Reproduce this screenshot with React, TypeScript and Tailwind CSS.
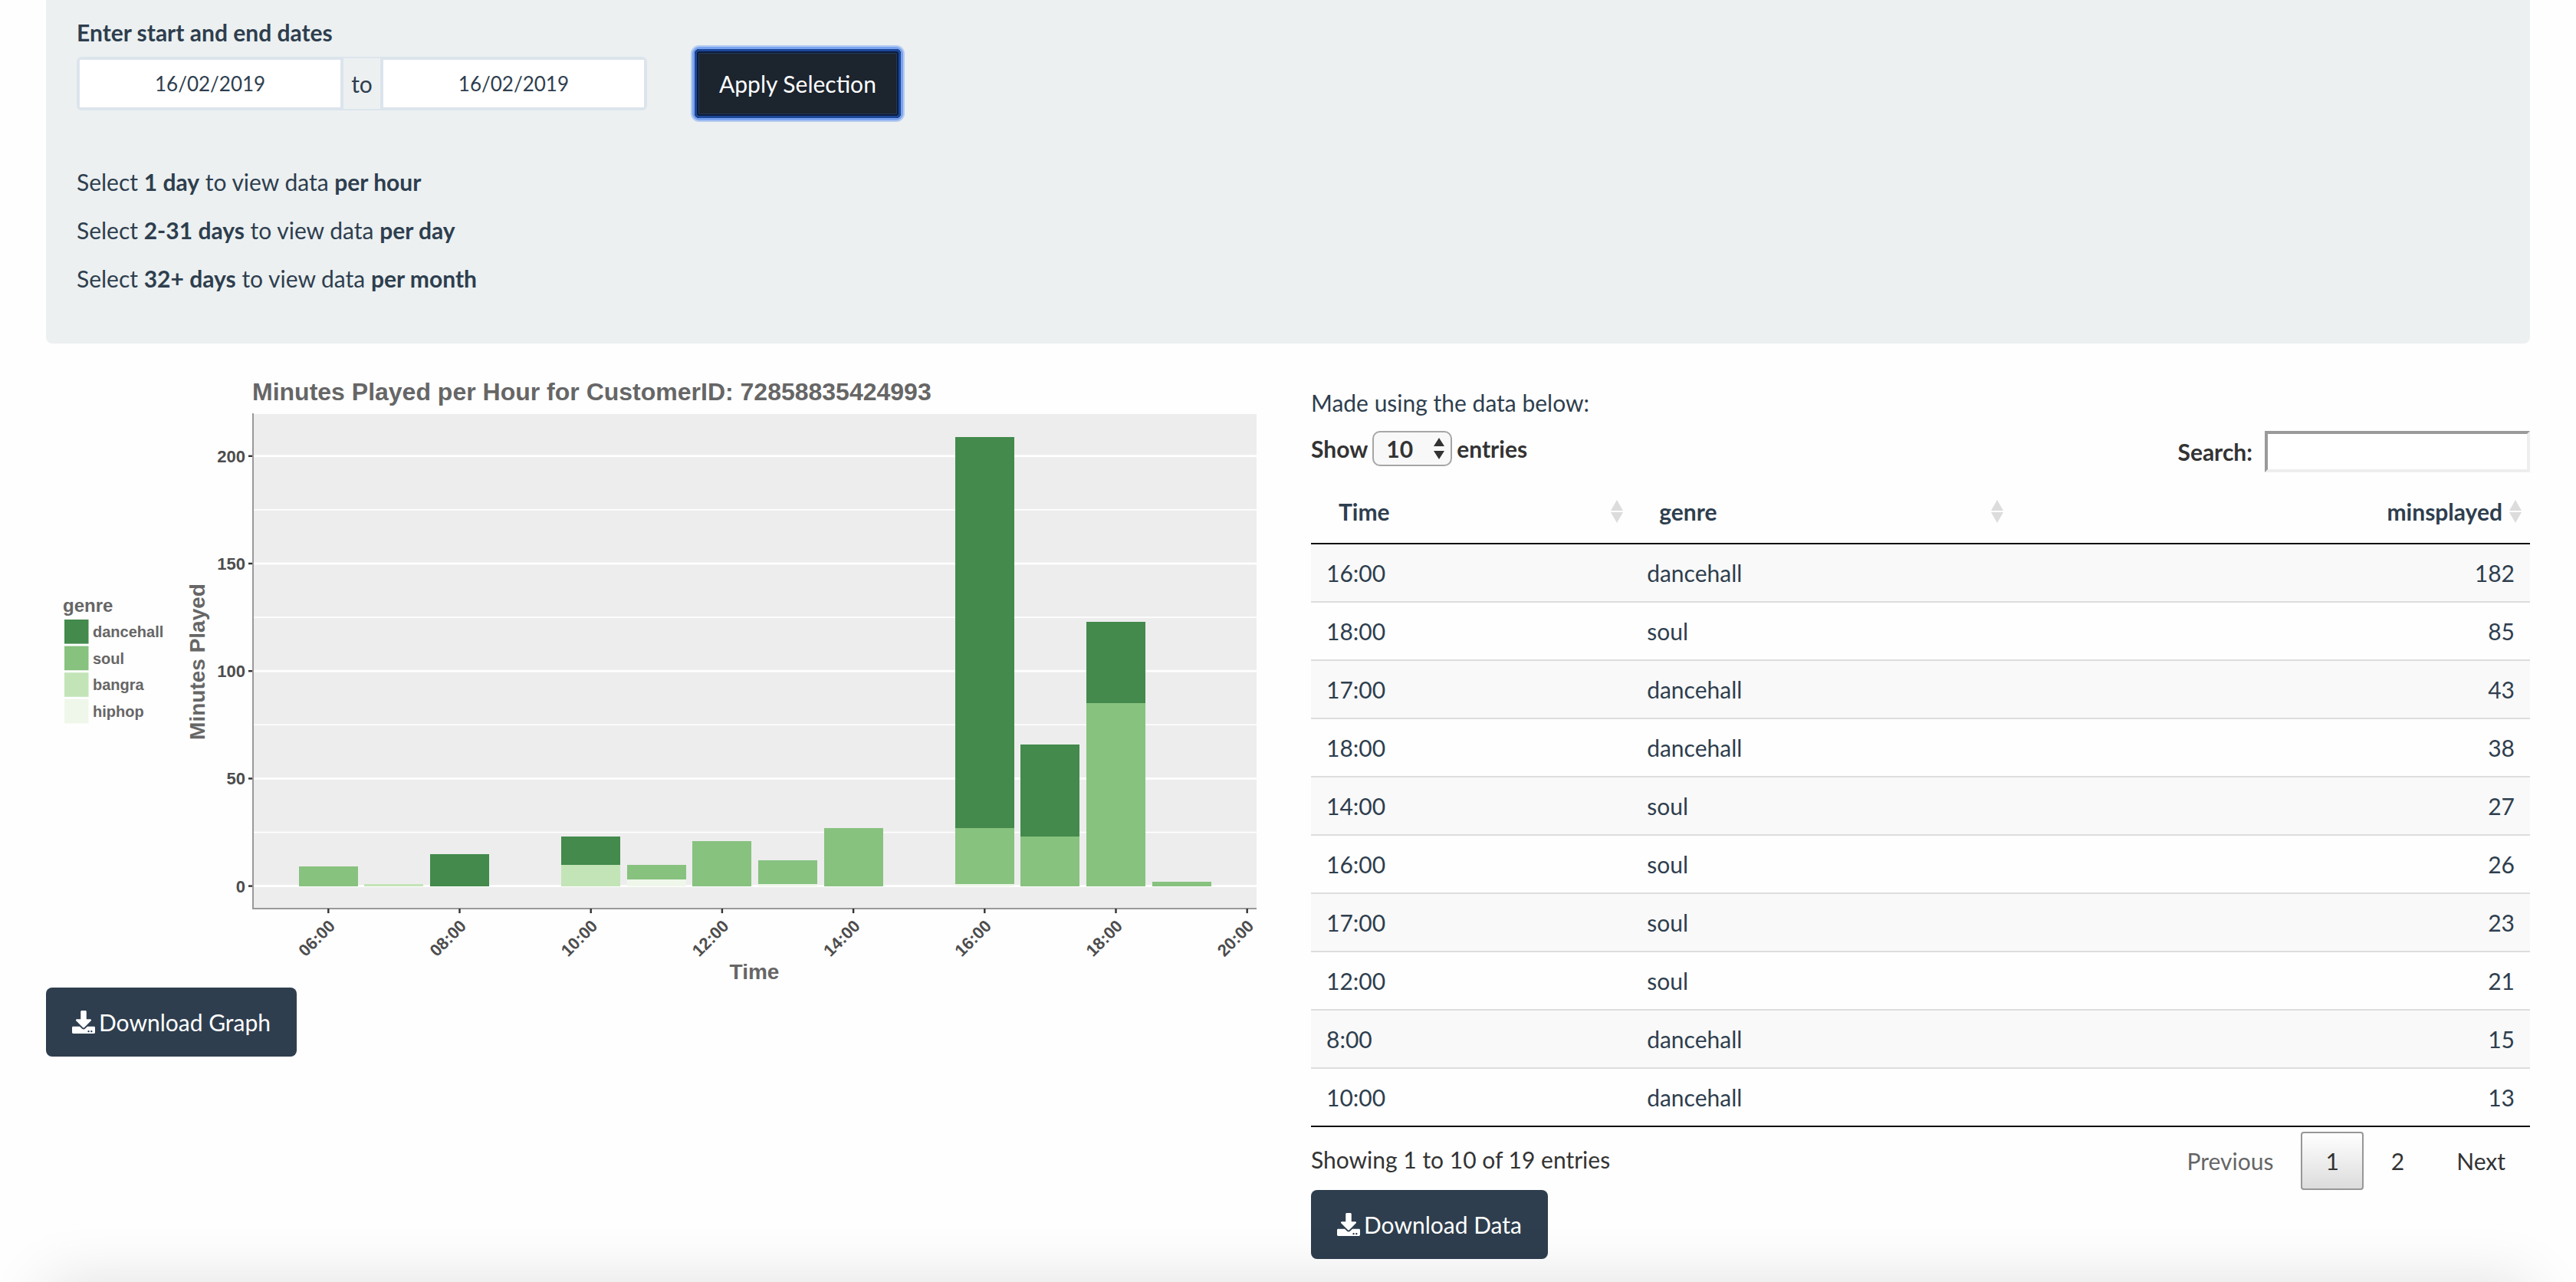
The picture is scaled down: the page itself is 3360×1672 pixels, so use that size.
import React from "react";
import { FaDownload } from "react-icons/fa";

type Genre = "dancehall" | "soul" | "bangra" | "hiphop";

const fills: Record<Genre, string> = {
  dancehall: "#438a4c",
  soul: "#87c27f",
  bangra: "#c3e4b7",
  hiphop: "#eff7eb",
};

const genres: Genre[] = ["dancehall", "soul", "bangra", "hiphop"];

// Segments are stacked upwards from the zero line.
const stacks: { hour: number; parts: [Genre, number][] }[] = [
  { hour: 6, parts: [["soul", 9]] },
  { hour: 7, parts: [["bangra", 1]] },
  { hour: 8, parts: [["dancehall", 15]] },
  { hour: 10, parts: [["bangra", 10], ["dancehall", 13]] },
  { hour: 11, parts: [["hiphop", 3], ["soul", 7]] },
  { hour: 12, parts: [["soul", 21]] },
  { hour: 13, parts: [["hiphop", 1], ["soul", 11]] },
  { hour: 14, parts: [["soul", 27]] },
  { hour: 16, parts: [["hiphop", 1], ["soul", 26], ["dancehall", 182]] },
  { hour: 17, parts: [["soul", 23], ["dancehall", 43]] },
  { hour: 18, parts: [["soul", 85], ["dancehall", 38]] },
  { hour: 19, parts: [["soul", 2]] },
];

const rows: [string, string, number][] = [
  ["16:00", "dancehall", 182],
  ["18:00", "soul", 85],
  ["17:00", "dancehall", 43],
  ["18:00", "dancehall", 38],
  ["14:00", "soul", 27],
  ["16:00", "soul", 26],
  ["17:00", "soul", 23],
  ["12:00", "soul", 21],
  ["8:00", "dancehall", 15],
  ["10:00", "dancehall", 13],
];

const xAt = (hour: number) => 368.3 + 85.6 * (hour - 6);
const yAt = (mins: number) => 667.6 - 2.804 * mins;

function Chart() {
  return (
    <svg
      viewBox="0 0 1590 800"
      className="block w-full"
      role="img"
      aria-label="Minutes played per hour, stacked by genre"
      fontFamily='"Liberation Sans", Arial, sans-serif'
      fontWeight="bold"
      fill="#666666"
    >
      <text x="269" y="34" fontSize="32">
        Minutes Played per Hour for CustomerID: 72858835424993
      </text>
      <rect x="270" y="52" width="1309" height="645" fill="#ededed" />
      {[25, 75, 125, 175].map((v) => (
        <rect key={v} x="270" y={yAt(v) - 0.8} width="1309" height="1.6" fill="#ffffff" />
      ))}
      {[0, 50, 100, 150, 200].map((v) => (
        <g key={v}>
          <rect x="270" y={yAt(v) - 1.4} width="1309" height="2.8" fill="#ffffff" />
          <rect x="264" y={yAt(v) - 1.2} width="6" height="2.4" fill="#333333" />
          <text x="260" y={yAt(v) + 8} fontSize="22" textAnchor="end" fill="#4d4d4d">
            {v}
          </text>
        </g>
      ))}
      {stacks.map(({ hour, parts }) => {
        let base = 0;
        return (
          <g key={hour} shapeRendering="crispEdges">
            {parts.map(([genre, mins]) => {
              const from = base;
              base += mins;
              return (
                <rect
                  key={genre}
                  x={xAt(hour) - 38.5}
                  y={yAt(base)}
                  width="77"
                  height={yAt(from) - yAt(base)}
                  fill={fills[genre]}
                />
              );
            })}
          </g>
        );
      })}
      <rect x="269" y="51" width="2" height="647" fill="#999999" />
      <rect x="269" y="696" width="1310" height="2" fill="#999999" />
      {[6, 8, 10, 12, 14, 16, 18, 20].map((h) => (
        <g key={h}>
          <rect x={xAt(h) - 1.2} y="697" width="2.4" height="6" fill="#333333" />
          <text
            transform={`translate(${xAt(h) + 10} 721) rotate(-45)`}
            fontSize="22"
            textAnchor="end"
            fill="#4d4d4d"
          >
            {String(h).padStart(2, "0")}:00
          </text>
        </g>
      ))}
      <text x="924" y="789" fontSize="28" textAnchor="middle">
        Time
      </text>
      <text transform="translate(207 375) rotate(-90)" fontSize="28" textAnchor="middle">
        Minutes Played
      </text>
      <text x="22" y="310" fontSize="24">
        genre
      </text>
      {genres.map((g, i) => (
        <g key={g}>
          <rect x="24" y={320 + i * 34.6} width="31.5" height="31.6" fill={fills[g]} />
          <text x="61" y={343 + i * 34.6} fontSize="20">
            {g}
          </text>
        </g>
      ))}
    </svg>
  );
}

function SortIcon() {
  return (
    <svg viewBox="0 0 16 30" className="h-[30px] w-4 shrink-0" fill="#dcdcdc" aria-hidden="true">
      <path d="M8 0L16 14H0zM8 30L0 16H16z" />
    </svg>
  );
}

function DownloadButton({ label }: { label: string }) {
  return (
    <button
      type="button"
      className="flex h-[90px] items-center gap-[5px] rounded-lg bg-[#2e3e4e] px-[34px] text-white"
    >
      <FaDownload aria-hidden="true" />
      {label}
    </button>
  );
}

function Hint({ range, unit }: { range: string; unit: string }) {
  return (
    <p>
      Select <strong>{range}</strong> to view data <strong>{unit}</strong>
    </p>
  );
}

export default function App() {
  return (
    <div className="relative min-h-screen overflow-hidden bg-[#fefefe] px-[60px] pb-[30px] font-['Lato',sans-serif] text-[30px] leading-[42px] text-[#2e3e4e]">
      <section className="rounded-b-lg bg-[#ecf0f1] px-10 pt-[21px] pb-16">
        <div className="flex items-start gap-[62px]">
          <div>
            <label htmlFor="start-date" className="block font-bold">
              Enter start and end dates
            </label>
            <div className="mt-[11px] flex h-[70px] w-[744px] items-stretch overflow-hidden rounded-md">
              <input
                id="start-date"
                defaultValue="16/02/2019"
                className="min-w-0 flex-1 border-4 border-[#dce4ec] bg-white text-center text-[26px] outline-none"
              />
              <span className="flex items-center border-y-2 border-[#dce4ec] px-[10px]">to</span>
              <input
                aria-label="End date"
                defaultValue="16/02/2019"
                className="min-w-0 flex-1 border-4 border-[#dce4ec] bg-white text-center text-[26px] outline-none"
              />
            </div>
          </div>
          <button
            type="button"
            className="mt-[43px] h-[90px] rounded-md bg-[#1c242e] px-8 text-white shadow-[inset_0_0_0_3px_#1c4899,inset_0_0_0_5px_#0b1b3c,inset_0_0_0_6px_#24395c,0_0_0_3px_#7aa4f0,0_0_0_5px_#b5cbf0]"
          >
            Apply Selection
          </button>
        </div>
        <div className="mt-[62px] flex flex-col gap-[21px]">
          <Hint range="1 day" unit="per hour" />
          <Hint range="2-31 days" unit="per day" />
          <Hint range="32+ days" unit="per month" />
        </div>
      </section>

      <main className="mt-10 grid grid-cols-2 gap-[60px]">
        <div>
          <Chart />
          <DownloadButton label="Download Graph" />
        </div>

        <div className="pt-4">
          <p>Made using the data below:</p>
          <div className="mt-4 flex items-start justify-between font-bold text-[#333333]">
            <label className="flex items-center gap-[6px]">
              Show
              <span className="relative">
                <select
                  defaultValue="10"
                  className="block h-[46px] w-[104px] appearance-none rounded-[10px] border-2 border-[#a6a6a6] bg-[#f8f8f8] pl-4 leading-[40px]"
                >
                  <option>10</option>
                  <option>25</option>
                  <option>50</option>
                  <option>100</option>
                </select>
                <svg
                  viewBox="0 0 14 28"
                  className="pointer-events-none absolute top-[9px] right-[10px] h-7 w-[14px]"
                  fill="#333333"
                  aria-hidden="true"
                >
                  <path d="M7 0L14 11H0zM7 28L0 17H14z" />
                </svg>
              </span>
              entries
            </label>
            <label className="flex items-center gap-4">
              Search:
              <input
                type="search"
                className="h-[54px] w-[346px] appearance-none border-4 border-t-[#9a9a9a] border-r-[#eeeeee] border-b-[#eeeeee] border-l-[#9a9a9a] bg-white px-2 outline-none"
              />
            </label>
          </div>

          <table className="mt-[10px] w-full table-fixed border-separate border-spacing-0">
            <colgroup>
              <col className="w-[26.3%]" />
              <col className="w-[31.2%]" />
              <col />
            </colgroup>
            <thead>
              <tr>
                {["Time", "genre"].map((name) => (
                  <th key={name} className="border-b-2 border-[#111111] py-5 pr-[11px] pl-9 font-bold">
                    <span className="flex items-center justify-between">
                      {name}
                      <SortIcon />
                    </span>
                  </th>
                ))}
                <th className="border-b-2 border-[#111111] py-5 pr-[11px] pl-9 font-bold">
                  <span className="flex items-center justify-end gap-[9px]">
                    minsplayed
                    <SortIcon />
                  </span>
                </th>
              </tr>
            </thead>
            <tbody>
              {rows.map(([time, genre, mins], i) => (
                <tr
                  key={i}
                  className="odd:bg-[#f9f9f9] [&:not(:first-child)>td]:border-t-2 [&>td]:border-[#dddddd] [&>td]:px-5 [&>td]:py-4"
                >
                  <td>{time}</td>
                  <td>{genre}</td>
                  <td className="text-right">{mins}</td>
                </tr>
              ))}
            </tbody>
          </table>

          <div className="flex h-[84px] items-start justify-between border-t-2 border-[#111111] pt-[6px] text-[#333333]">
            <p className="pt-[15px]">Showing 1 to 10 of 19 entries</p>
            <nav aria-label="Table pages" className="flex gap-1">
              <button type="button" className="h-[76px] border-2 border-transparent px-[30px] text-[#666666]">
                Previous
              </button>
              <button
                type="button"
                aria-current="page"
                className="h-[76px] rounded-[4px] border-2 border-[#979797] bg-linear-to-b from-white to-[#dcdcdc] px-[30px]"
              >
                1
              </button>
              <button type="button" className="h-[76px] border-2 border-transparent px-[30px]">
                2
              </button>
              <button type="button" className="h-[76px] border-2 border-transparent px-[30px]">
                Next
              </button>
            </nav>
          </div>
          <DownloadButton label="Download Data" />
        </div>
      </main>

      <div className="pointer-events-none absolute inset-x-[60px] top-full h-40 shadow-[0_0_80px_rgba(0,0,0,0.12)]" />
    </div>
  );
}
